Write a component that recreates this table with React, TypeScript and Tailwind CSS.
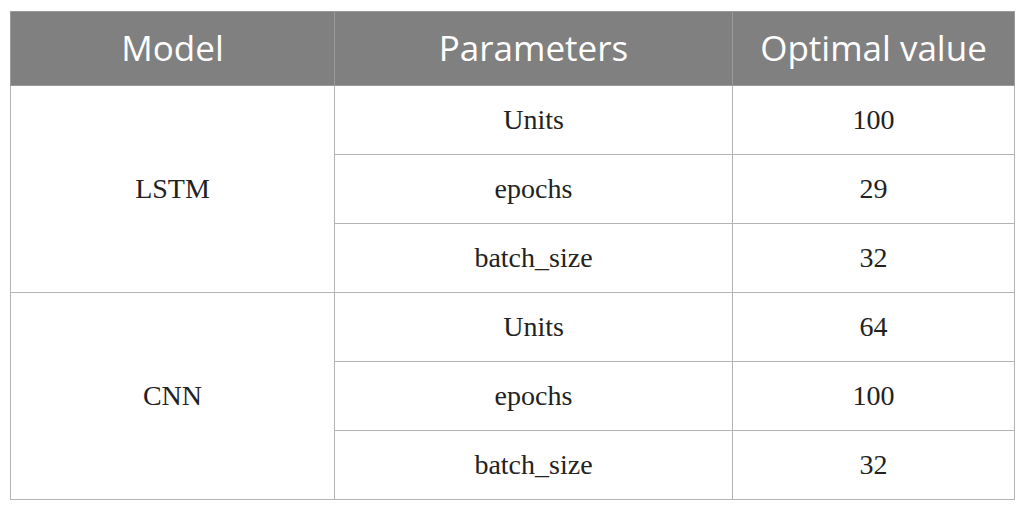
const rows = [
  { model: 'LSTM', params: [['Units', '100'], ['epochs', '29'], ['batch_size', '32']] },
  { model: 'CNN', params: [['Units', '64'], ['epochs', '100'], ['batch_size', '32']] },
]

export default function App() {
  return (
    <div className="h-[511px] w-[1025px] bg-white pl-[10px] pt-[11px]">
      <table className="w-[1005px] table-fixed border-collapse border border-[#b4b4b4]">
        <colgroup>
          <col className="w-[324px]" />
          <col className="w-[398px]" />
          <col />
        </colgroup>
        <thead>
          <tr className="h-[74px] bg-[#808080] text-[35px] text-white" style={{ fontFamily: '"Open Sans", Lato, sans-serif' }}>
            <th className="border border-[#9a9a9a] font-normal">Model</th>
            <th className="border border-[#9a9a9a] font-normal">Parameters</th>
            <th className="border border-[#9a9a9a] font-normal">Optimal value</th>
          </tr>
        </thead>
        <tbody className="text-[28px] text-[#222]" style={{ fontFamily: '"Liberation Serif", serif' }}>
          {rows.map(r =>
            r.params.map(([p, v], i) => (
              <tr key={r.model + p} className="h-[69px]">
                {i === 0 && (
                  <td rowSpan={3} className="border border-[#b4b4b4] text-center">{r.model}</td>
                )}
                <td className="border border-[#b4b4b4] text-center">{p}</td>
                <td className="border border-[#b4b4b4] text-center">{v}</td>
              </tr>
            ))
          )}
        </tbody>
      </table>
    </div>
  )
}
